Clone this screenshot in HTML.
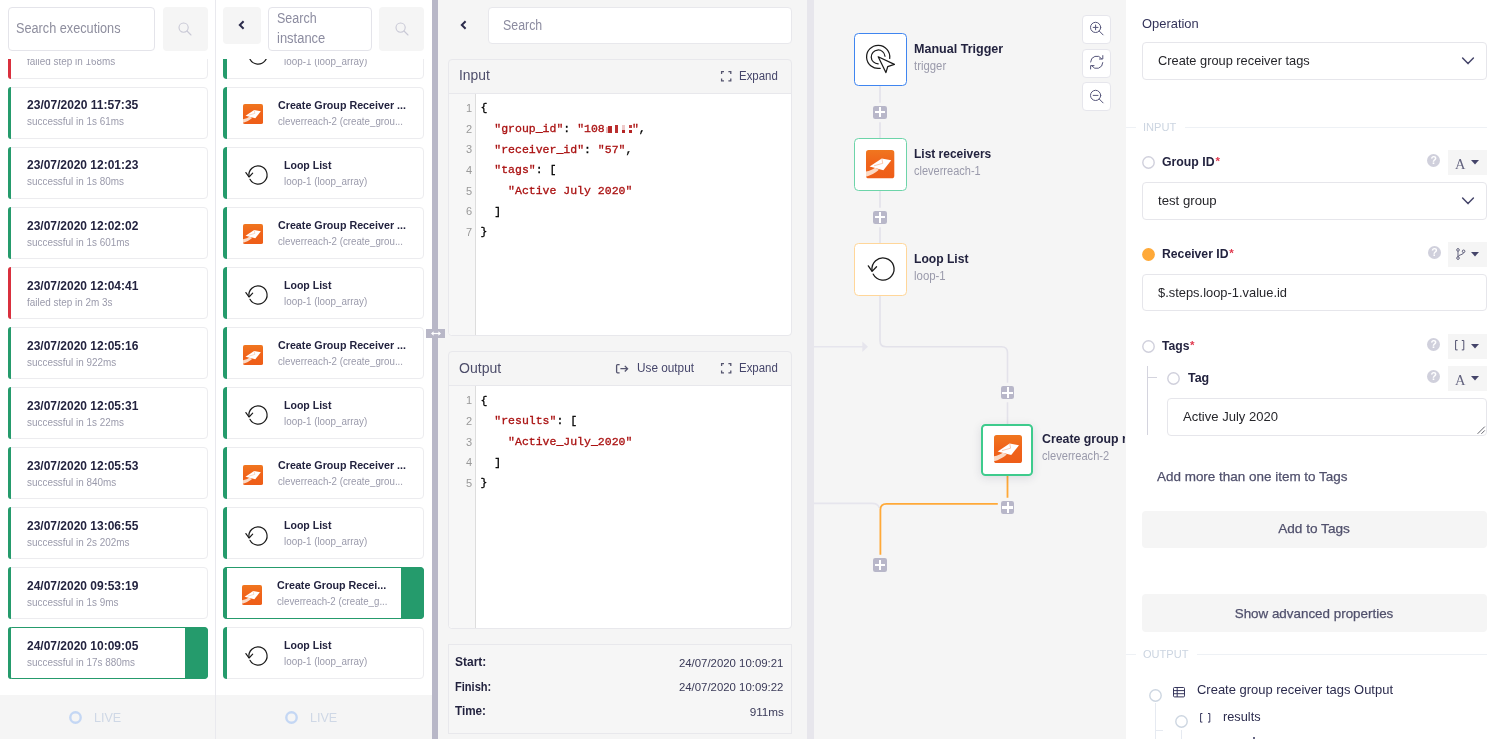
<!DOCTYPE html>
<html lang="en"><head><meta charset="utf-8"><title>Workflow debug</title>
<style>
html,body{margin:0;padding:0}
body{width:1500px;height:739px;overflow:hidden;position:relative;background:#fff;font-family:"Liberation Sans",Arial,sans-serif;-webkit-font-smoothing:antialiased}
i{display:block}
body>div{will-change:transform}
</style></head><body>
<div style="position:absolute;left:0px;top:0px;width:216px;height:739px;box-sizing:border-box;background:#fff;border-right:1px solid #e9e9ee;"><div style="position:absolute;left:8px;top:7px;width:147px;height:44px;box-sizing:border-box;border:1px solid #e4e4ea;border-radius:4px;background:#fff;"></div><span id="t1" style="position:absolute;left:16px;top:18.009px;font-size:14px;line-height:20px;font-weight:400;color:#8e8e9e;white-space:nowrap;transform:scaleX(0.9072);transform-origin:0 50%;">Search executions</span><div style="position:absolute;left:162.5px;top:7px;width:45px;height:44px;box-sizing:border-box;background:#f5f5f5;border-radius:4px;"></div><svg style="position:absolute;left:177px;top:21.3px;overflow:visible;" width="16" height="16" viewBox="0 0 16 16"><circle cx="6.6" cy="6.6" r="4.6" fill="none" stroke="#c9c9d6" stroke-width="1.1"/><path d="M10 10 L14 14" stroke="#c9c9d6" stroke-width="1.1" stroke-linecap="round"/></svg><div style="position:absolute;left:0px;top:59px;width:215px;height:636px;box-sizing:border-box;overflow:hidden;"><div style="position:absolute;left:7.5px;top:-32.45px;width:200px;height:52.3px;box-sizing:border-box;border:1px solid #ececef;border-radius:4px;background:#fff;"><div style="position:absolute;left:-1px;top:-1px;width:3.7px;height:52.3px;background:#d9303e;border-radius:4px 0 0 4px"></div><span id="e0a" style="position:absolute;left:18.3px;top:8.44px;font-size:13px;line-height:18px;font-weight:700;color:#23233f;white-space:nowrap;transform:scaleX(0.9275);transform-origin:0 50%;">23/07/2020 11:51:12</span><span id="e0b" style="position:absolute;left:18.3px;top:26.44px;font-size:11px;line-height:15px;font-weight:400;color:#9a9aab;white-space:nowrap;transform:scaleX(0.9014);transform-origin:0 50%;">failed step in 168ms</span></div><div style="position:absolute;left:7.5px;top:27.61px;width:200px;height:52.3px;box-sizing:border-box;border:1px solid #ececef;border-radius:4px;background:#fff;"><div style="position:absolute;left:-1px;top:-1px;width:3.7px;height:52.3px;background:#259b6c;border-radius:4px 0 0 4px"></div><span id="e1a" style="position:absolute;left:18.3px;top:8.393px;font-size:13px;line-height:18px;font-weight:700;color:#23233f;white-space:nowrap;transform:scaleX(0.9275);transform-origin:0 50%;">23/07/2020 11:57:35</span><span id="e1b" style="position:absolute;left:18.3px;top:26.393px;font-size:11px;line-height:15px;font-weight:400;color:#9a9aab;white-space:nowrap;transform:scaleX(0.9014);transform-origin:0 50%;">successful in 1s 61ms</span></div><div style="position:absolute;left:7.5px;top:87.67px;width:200px;height:52.3px;box-sizing:border-box;border:1px solid #ececef;border-radius:4px;background:#fff;"><div style="position:absolute;left:-1px;top:-1px;width:3.7px;height:52.3px;background:#259b6c;border-radius:4px 0 0 4px"></div><span id="e2a" style="position:absolute;left:18.3px;top:8.347px;font-size:13px;line-height:18px;font-weight:700;color:#23233f;white-space:nowrap;transform:scaleX(0.9220);transform-origin:0 50%;">23/07/2020 12:01:23</span><span id="e2b" style="position:absolute;left:18.3px;top:26.347px;font-size:11px;line-height:15px;font-weight:400;color:#9a9aab;white-space:nowrap;transform:scaleX(0.9014);transform-origin:0 50%;">successful in 1s 80ms</span></div><div style="position:absolute;left:7.5px;top:147.73px;width:200px;height:52.3px;box-sizing:border-box;border:1px solid #ececef;border-radius:4px;background:#fff;"><div style="position:absolute;left:-1px;top:-1px;width:3.7px;height:52.3px;background:#259b6c;border-radius:4px 0 0 4px"></div><span id="e3a" style="position:absolute;left:18.3px;top:9.284px;font-size:13px;line-height:18px;font-weight:700;color:#23233f;white-space:nowrap;transform:scaleX(0.9220);transform-origin:0 50%;">23/07/2020 12:02:02</span><span id="e3b" style="position:absolute;left:18.3px;top:27.284px;font-size:11px;line-height:15px;font-weight:400;color:#9a9aab;white-space:nowrap;transform:scaleX(0.9014);transform-origin:0 50%;">successful in 1s 601ms</span></div><div style="position:absolute;left:7.5px;top:207.79px;width:200px;height:52.3px;box-sizing:border-box;border:1px solid #ececef;border-radius:4px;background:#fff;"><div style="position:absolute;left:-1px;top:-1px;width:3.7px;height:52.3px;background:#d9303e;border-radius:4px 0 0 4px"></div><span id="e4a" style="position:absolute;left:18.3px;top:9.222px;font-size:13px;line-height:18px;font-weight:700;color:#23233f;white-space:nowrap;transform:scaleX(0.9220);transform-origin:0 50%;">23/07/2020 12:04:41</span><span id="e4b" style="position:absolute;left:18.3px;top:27.222px;font-size:11px;line-height:15px;font-weight:400;color:#9a9aab;white-space:nowrap;transform:scaleX(0.9014);transform-origin:0 50%;">failed step in 2m 3s</span></div><div style="position:absolute;left:7.5px;top:267.85px;width:200px;height:52.3px;box-sizing:border-box;border:1px solid #ececef;border-radius:4px;background:#fff;"><div style="position:absolute;left:-1px;top:-1px;width:3.7px;height:52.3px;background:#259b6c;border-radius:4px 0 0 4px"></div><span id="e5a" style="position:absolute;left:18.3px;top:9.159px;font-size:13px;line-height:18px;font-weight:700;color:#23233f;white-space:nowrap;transform:scaleX(0.9220);transform-origin:0 50%;">23/07/2020 12:05:16</span><span id="e5b" style="position:absolute;left:18.3px;top:27.159px;font-size:11px;line-height:15px;font-weight:400;color:#9a9aab;white-space:nowrap;transform:scaleX(0.9014);transform-origin:0 50%;">successful in 922ms</span></div><div style="position:absolute;left:7.5px;top:327.91px;width:200px;height:52.3px;box-sizing:border-box;border:1px solid #ececef;border-radius:4px;background:#fff;"><div style="position:absolute;left:-1px;top:-1px;width:3.7px;height:52.3px;background:#259b6c;border-radius:4px 0 0 4px"></div><span id="e6a" style="position:absolute;left:18.3px;top:9.096px;font-size:13px;line-height:18px;font-weight:700;color:#23233f;white-space:nowrap;transform:scaleX(0.9220);transform-origin:0 50%;">23/07/2020 12:05:31</span><span id="e6b" style="position:absolute;left:18.3px;top:27.096px;font-size:11px;line-height:15px;font-weight:400;color:#9a9aab;white-space:nowrap;transform:scaleX(0.9014);transform-origin:0 50%;">successful in 1s 22ms</span></div><div style="position:absolute;left:7.5px;top:387.97px;width:200px;height:52.3px;box-sizing:border-box;border:1px solid #ececef;border-radius:4px;background:#fff;"><div style="position:absolute;left:-1px;top:-1px;width:3.7px;height:52.3px;background:#259b6c;border-radius:4px 0 0 4px"></div><span id="e7a" style="position:absolute;left:18.3px;top:9.034px;font-size:13px;line-height:18px;font-weight:700;color:#23233f;white-space:nowrap;transform:scaleX(0.9220);transform-origin:0 50%;">23/07/2020 12:05:53</span><span id="e7b" style="position:absolute;left:18.3px;top:27.034px;font-size:11px;line-height:15px;font-weight:400;color:#9a9aab;white-space:nowrap;transform:scaleX(0.9014);transform-origin:0 50%;">successful in 840ms</span></div><div style="position:absolute;left:7.5px;top:448.03px;width:200px;height:52.3px;box-sizing:border-box;border:1px solid #ececef;border-radius:4px;background:#fff;"><div style="position:absolute;left:-1px;top:-1px;width:3.7px;height:52.3px;background:#259b6c;border-radius:4px 0 0 4px"></div><span id="e8a" style="position:absolute;left:18.3px;top:8.988px;font-size:13px;line-height:18px;font-weight:700;color:#23233f;white-space:nowrap;transform:scaleX(0.9220);transform-origin:0 50%;">23/07/2020 13:06:55</span><span id="e8b" style="position:absolute;left:18.3px;top:26.988px;font-size:11px;line-height:15px;font-weight:400;color:#9a9aab;white-space:nowrap;transform:scaleX(0.9014);transform-origin:0 50%;">successful in 2s 202ms</span></div><div style="position:absolute;left:7.5px;top:508.09px;width:200px;height:52.3px;box-sizing:border-box;border:1px solid #ececef;border-radius:4px;background:#fff;"><div style="position:absolute;left:-1px;top:-1px;width:3.7px;height:52.3px;background:#259b6c;border-radius:4px 0 0 4px"></div><span id="e9a" style="position:absolute;left:18.3px;top:8.925px;font-size:13px;line-height:18px;font-weight:700;color:#23233f;white-space:nowrap;transform:scaleX(0.9220);transform-origin:0 50%;">24/07/2020 09:53:19</span><span id="e9b" style="position:absolute;left:18.3px;top:26.925px;font-size:11px;line-height:15px;font-weight:400;color:#9a9aab;white-space:nowrap;transform:scaleX(0.9014);transform-origin:0 50%;">successful in 1s 9ms</span></div><div style="position:absolute;left:7.5px;top:568.15px;width:200px;height:52.3px;box-sizing:border-box;border:1px solid #259b6c;border-radius:4px;background:#fff;"><div style="position:absolute;left:-1px;top:-1px;width:3.7px;height:52.3px;background:#259b6c;border-radius:4px 0 0 4px"></div><div style="position:absolute;right:-1px;top:-1px;width:22.6px;height:52.3px;background:#259b6c;border-radius:0 4px 4px 0"></div><span id="e10a" style="position:absolute;left:18.3px;top:8.862px;font-size:13px;line-height:18px;font-weight:700;color:#23233f;white-space:nowrap;transform:scaleX(0.9220);transform-origin:0 50%;">24/07/2020 10:09:05</span><span id="e10b" style="position:absolute;left:18.3px;top:26.862px;font-size:11px;line-height:15px;font-weight:400;color:#9a9aab;white-space:nowrap;transform:scaleX(0.9014);transform-origin:0 50%;">successful in 17s 880ms</span></div></div><div style="position:absolute;left:0px;top:695px;width:215px;height:44px;box-sizing:border-box;background:#f5f5f5;"><svg style="position:absolute;left:68.8px;top:15.9px;overflow:visible;" width="13" height="13" viewBox="0 0 13 13"><circle cx="6.5" cy="6.5" r="5.2" fill="none" stroke="#c4d7f4" stroke-width="2.4"/></svg><span id="live215" style="position:absolute;left:94.2px;top:13.006px;font-size:13.5px;line-height:19px;font-weight:400;color:#cfd8e6;white-space:nowrap;transform:scaleX(0.9289);transform-origin:0 50%;">LIVE</span></div></div>
<div style="position:absolute;left:216px;top:0px;width:216px;height:739px;box-sizing:border-box;background:#fff;"><div style="position:absolute;left:7.3px;top:7px;width:37.6px;height:37px;box-sizing:border-box;background:#f5f5f5;border-radius:4px;"></div><svg style="position:absolute;left:22px;top:20.3px;overflow:visible;" width="8" height="10" viewBox="0 0 8 10"><path d="M5.6 1.2 L1.8 5 L5.6 8.8" fill="none" stroke="#2b2b4b" stroke-width="2" stroke-linejoin="miter"/></svg><div style="position:absolute;left:52.3px;top:7px;width:103.5px;height:44px;box-sizing:border-box;border:1px solid #e4e4ea;border-radius:4px;background:#fff;"></div><span id="si1" style="position:absolute;left:60.7px;top:8.003px;font-size:14px;line-height:20px;font-weight:400;color:#8c8ca0;white-space:nowrap;transform:scaleX(0.8927);transform-origin:0 50%;">Search</span><span id="si2" style="position:absolute;left:60.7px;top:28.003px;font-size:14px;line-height:20px;font-weight:400;color:#8c8ca0;white-space:nowrap;transform:scaleX(0.9261);transform-origin:0 50%;">instance</span><div style="position:absolute;left:163px;top:7px;width:45px;height:44px;box-sizing:border-box;background:#f5f5f5;border-radius:4px;"></div><svg style="position:absolute;left:177.8px;top:21.3px;overflow:visible;" width="16" height="16" viewBox="0 0 16 16"><circle cx="6.6" cy="6.6" r="4.6" fill="none" stroke="#c9c9d6" stroke-width="1.1"/><path d="M10 10 L14 14" stroke="#c9c9d6" stroke-width="1.1" stroke-linecap="round"/></svg><div style="position:absolute;left:0px;top:59px;width:216px;height:636px;box-sizing:border-box;overflow:hidden;"><div style="position:absolute;left:7.2px;top:-32.45px;width:200.6px;height:52.3px;box-sizing:border-box;border:1px solid #ececef;border-radius:4px;background:#fff;"><div style="position:absolute;left:-1px;top:-1px;width:3.7px;height:52.3px;background:#259b6c;border-radius:4px 0 0 4px"></div><div style="position:absolute;left:33.6px;top:27.5px"><svg style="position:absolute;left:0;top:0;overflow:visible" width="1" height="1"><path d="M-8.03 4.27 A9.1 9.1 0 1 0 -8.99 1.42" fill="none" stroke="#1a1a1a" stroke-width="1.2" stroke-linecap="round"/><path d="M-12.10 -2.45 L-8.99 2.02 L-5.32 -1.81" fill="none" stroke="#1a1a1a" stroke-width="1.2" stroke-linecap="round" stroke-linejoin="round"/></svg></div><span id="s0a" style="position:absolute;left:59.6px;top:9.45px;font-size:11.4px;line-height:16px;font-weight:700;color:#23233f;white-space:nowrap;transform:scaleX(0.9268);transform-origin:0 50%;">Loop List</span><span id="s0b" style="position:absolute;left:59.6px;top:26.45px;font-size:10.4px;line-height:15px;font-weight:400;color:#9a9aab;white-space:nowrap;transform:scaleX(0.9488);transform-origin:0 50%;">loop-1 (loop_array)</span></div><div style="position:absolute;left:7.2px;top:27.61px;width:200.6px;height:52.3px;box-sizing:border-box;border:1px solid #ececef;border-radius:4px;background:#fff;"><div style="position:absolute;left:-1px;top:-1px;width:3.7px;height:52.3px;background:#259b6c;border-radius:4px 0 0 4px"></div><svg style="position:absolute;left:19px;top:16.7px;overflow:visible;" width="20" height="20" viewBox="0 0 28 28"><defs><linearGradient id="cg28" x1="0" y1="0" x2="0" y2="1"><stop offset="0" stop-color="#f0761f"/><stop offset="0.45" stop-color="#f0641a"/><stop offset="1" stop-color="#ee5d18"/></linearGradient><clipPath id="cc28"><rect x="0" y="0" width="28" height="28" rx="2.6"/></clipPath></defs><rect x="0" y="0" width="28" height="28" rx="2.6" fill="url(#cg28)"/><g clip-path="url(#cc28)"><path d="M-1 21.5 C3 21 6.5 19.5 9 17.6 L12.8 19.6 C9 23 4 25.5 -1 26.6 Z" fill="#fbd9c4"/><path d="M3.6 16.4 L15.6 8.4 L25 10.2 L17.2 20 Z" fill="#ffffff"/><path d="M15.8 9 L16.6 13.2 L8 15.6" fill="none" stroke="#f6a57a" stroke-width="0.6"/></g></svg><span id="s1a" style="position:absolute;left:54.3px;top:9.403px;font-size:11.4px;line-height:16px;font-weight:700;color:#23233f;white-space:nowrap;transform:scaleX(0.9404);transform-origin:0 50%;">Create Group Receiver ...</span><span id="s1b" style="position:absolute;left:54.3px;top:26.403px;font-size:10.4px;line-height:15px;font-weight:400;color:#9a9aab;white-space:nowrap;transform:scaleX(0.9369);transform-origin:0 50%;">cleverreach-2 (create_grou...</span></div><div style="position:absolute;left:7.2px;top:87.67px;width:200.6px;height:52.3px;box-sizing:border-box;border:1px solid #ececef;border-radius:4px;background:#fff;"><div style="position:absolute;left:-1px;top:-1px;width:3.7px;height:52.3px;background:#259b6c;border-radius:4px 0 0 4px"></div><div style="position:absolute;left:33.6px;top:27.5px"><svg style="position:absolute;left:0;top:0;overflow:visible" width="1" height="1"><path d="M-8.03 4.27 A9.1 9.1 0 1 0 -8.99 1.42" fill="none" stroke="#1a1a1a" stroke-width="1.2" stroke-linecap="round"/><path d="M-12.10 -2.45 L-8.99 2.02 L-5.32 -1.81" fill="none" stroke="#1a1a1a" stroke-width="1.2" stroke-linecap="round" stroke-linejoin="round"/></svg></div><span id="s2a" style="position:absolute;left:59.6px;top:9.357px;font-size:11.4px;line-height:16px;font-weight:700;color:#23233f;white-space:nowrap;transform:scaleX(0.9268);transform-origin:0 50%;">Loop List</span><span id="s2b" style="position:absolute;left:59.6px;top:26.357px;font-size:10.4px;line-height:15px;font-weight:400;color:#9a9aab;white-space:nowrap;transform:scaleX(0.9488);transform-origin:0 50%;">loop-1 (loop_array)</span></div><div style="position:absolute;left:7.2px;top:147.73px;width:200.6px;height:52.3px;box-sizing:border-box;border:1px solid #ececef;border-radius:4px;background:#fff;"><div style="position:absolute;left:-1px;top:-1px;width:3.7px;height:52.3px;background:#259b6c;border-radius:4px 0 0 4px"></div><svg style="position:absolute;left:19px;top:16.7px;overflow:visible;" width="20" height="20" viewBox="0 0 28 28"><defs><linearGradient id="cg33" x1="0" y1="0" x2="0" y2="1"><stop offset="0" stop-color="#f0761f"/><stop offset="0.45" stop-color="#f0641a"/><stop offset="1" stop-color="#ee5d18"/></linearGradient><clipPath id="cc33"><rect x="0" y="0" width="28" height="28" rx="2.6"/></clipPath></defs><rect x="0" y="0" width="28" height="28" rx="2.6" fill="url(#cg33)"/><g clip-path="url(#cc33)"><path d="M-1 21.5 C3 21 6.5 19.5 9 17.6 L12.8 19.6 C9 23 4 25.5 -1 26.6 Z" fill="#fbd9c4"/><path d="M3.6 16.4 L15.6 8.4 L25 10.2 L17.2 20 Z" fill="#ffffff"/><path d="M15.8 9 L16.6 13.2 L8 15.6" fill="none" stroke="#f6a57a" stroke-width="0.6"/></g></svg><span id="s3a" style="position:absolute;left:54.3px;top:9.294px;font-size:11.4px;line-height:16px;font-weight:700;color:#23233f;white-space:nowrap;transform:scaleX(0.9404);transform-origin:0 50%;">Create Group Receiver ...</span><span id="s3b" style="position:absolute;left:54.3px;top:26.294px;font-size:10.4px;line-height:15px;font-weight:400;color:#9a9aab;white-space:nowrap;transform:scaleX(0.9369);transform-origin:0 50%;">cleverreach-2 (create_grou...</span></div><div style="position:absolute;left:7.2px;top:207.79px;width:200.6px;height:52.3px;box-sizing:border-box;border:1px solid #ececef;border-radius:4px;background:#fff;"><div style="position:absolute;left:-1px;top:-1px;width:3.7px;height:52.3px;background:#259b6c;border-radius:4px 0 0 4px"></div><div style="position:absolute;left:33.6px;top:27.5px"><svg style="position:absolute;left:0;top:0;overflow:visible" width="1" height="1"><path d="M-8.03 4.27 A9.1 9.1 0 1 0 -8.99 1.42" fill="none" stroke="#1a1a1a" stroke-width="1.2" stroke-linecap="round"/><path d="M-12.10 -2.45 L-8.99 2.02 L-5.32 -1.81" fill="none" stroke="#1a1a1a" stroke-width="1.2" stroke-linecap="round" stroke-linejoin="round"/></svg></div><span id="s4a" style="position:absolute;left:59.6px;top:9.231px;font-size:11.4px;line-height:16px;font-weight:700;color:#23233f;white-space:nowrap;transform:scaleX(0.9268);transform-origin:0 50%;">Loop List</span><span id="s4b" style="position:absolute;left:59.6px;top:26.231px;font-size:10.4px;line-height:15px;font-weight:400;color:#9a9aab;white-space:nowrap;transform:scaleX(0.9488);transform-origin:0 50%;">loop-1 (loop_array)</span></div><div style="position:absolute;left:7.2px;top:267.85px;width:200.6px;height:52.3px;box-sizing:border-box;border:1px solid #ececef;border-radius:4px;background:#fff;"><div style="position:absolute;left:-1px;top:-1px;width:3.7px;height:52.3px;background:#259b6c;border-radius:4px 0 0 4px"></div><svg style="position:absolute;left:19px;top:16.7px;overflow:visible;" width="20" height="20" viewBox="0 0 28 28"><defs><linearGradient id="cg38" x1="0" y1="0" x2="0" y2="1"><stop offset="0" stop-color="#f0761f"/><stop offset="0.45" stop-color="#f0641a"/><stop offset="1" stop-color="#ee5d18"/></linearGradient><clipPath id="cc38"><rect x="0" y="0" width="28" height="28" rx="2.6"/></clipPath></defs><rect x="0" y="0" width="28" height="28" rx="2.6" fill="url(#cg38)"/><g clip-path="url(#cc38)"><path d="M-1 21.5 C3 21 6.5 19.5 9 17.6 L12.8 19.6 C9 23 4 25.5 -1 26.6 Z" fill="#fbd9c4"/><path d="M3.6 16.4 L15.6 8.4 L25 10.2 L17.2 20 Z" fill="#ffffff"/><path d="M15.8 9 L16.6 13.2 L8 15.6" fill="none" stroke="#f6a57a" stroke-width="0.6"/></g></svg><span id="s5a" style="position:absolute;left:54.3px;top:9.169px;font-size:11.4px;line-height:16px;font-weight:700;color:#23233f;white-space:nowrap;transform:scaleX(0.9404);transform-origin:0 50%;">Create Group Receiver ...</span><span id="s5b" style="position:absolute;left:54.3px;top:26.169px;font-size:10.4px;line-height:15px;font-weight:400;color:#9a9aab;white-space:nowrap;transform:scaleX(0.9369);transform-origin:0 50%;">cleverreach-2 (create_grou...</span></div><div style="position:absolute;left:7.2px;top:327.91px;width:200.6px;height:52.3px;box-sizing:border-box;border:1px solid #ececef;border-radius:4px;background:#fff;"><div style="position:absolute;left:-1px;top:-1px;width:3.7px;height:52.3px;background:#259b6c;border-radius:4px 0 0 4px"></div><div style="position:absolute;left:33.6px;top:27.5px"><svg style="position:absolute;left:0;top:0;overflow:visible" width="1" height="1"><path d="M-8.03 4.27 A9.1 9.1 0 1 0 -8.99 1.42" fill="none" stroke="#1a1a1a" stroke-width="1.2" stroke-linecap="round"/><path d="M-12.10 -2.45 L-8.99 2.02 L-5.32 -1.81" fill="none" stroke="#1a1a1a" stroke-width="1.2" stroke-linecap="round" stroke-linejoin="round"/></svg></div><span id="s6a" style="position:absolute;left:59.6px;top:9.106px;font-size:11.4px;line-height:16px;font-weight:700;color:#23233f;white-space:nowrap;transform:scaleX(0.9268);transform-origin:0 50%;">Loop List</span><span id="s6b" style="position:absolute;left:59.6px;top:26.106px;font-size:10.4px;line-height:15px;font-weight:400;color:#9a9aab;white-space:nowrap;transform:scaleX(0.9488);transform-origin:0 50%;">loop-1 (loop_array)</span></div><div style="position:absolute;left:7.2px;top:387.97px;width:200.6px;height:52.3px;box-sizing:border-box;border:1px solid #ececef;border-radius:4px;background:#fff;"><div style="position:absolute;left:-1px;top:-1px;width:3.7px;height:52.3px;background:#259b6c;border-radius:4px 0 0 4px"></div><svg style="position:absolute;left:19px;top:16.7px;overflow:visible;" width="20" height="20" viewBox="0 0 28 28"><defs><linearGradient id="cg43" x1="0" y1="0" x2="0" y2="1"><stop offset="0" stop-color="#f0761f"/><stop offset="0.45" stop-color="#f0641a"/><stop offset="1" stop-color="#ee5d18"/></linearGradient><clipPath id="cc43"><rect x="0" y="0" width="28" height="28" rx="2.6"/></clipPath></defs><rect x="0" y="0" width="28" height="28" rx="2.6" fill="url(#cg43)"/><g clip-path="url(#cc43)"><path d="M-1 21.5 C3 21 6.5 19.5 9 17.6 L12.8 19.6 C9 23 4 25.5 -1 26.6 Z" fill="#fbd9c4"/><path d="M3.6 16.4 L15.6 8.4 L25 10.2 L17.2 20 Z" fill="#ffffff"/><path d="M15.8 9 L16.6 13.2 L8 15.6" fill="none" stroke="#f6a57a" stroke-width="0.6"/></g></svg><span id="s7a" style="position:absolute;left:54.3px;top:9.044px;font-size:11.4px;line-height:16px;font-weight:700;color:#23233f;white-space:nowrap;transform:scaleX(0.9404);transform-origin:0 50%;">Create Group Receiver ...</span><span id="s7b" style="position:absolute;left:54.3px;top:26.044px;font-size:10.4px;line-height:15px;font-weight:400;color:#9a9aab;white-space:nowrap;transform:scaleX(0.9369);transform-origin:0 50%;">cleverreach-2 (create_grou...</span></div><div style="position:absolute;left:7.2px;top:448.03px;width:200.6px;height:52.3px;box-sizing:border-box;border:1px solid #ececef;border-radius:4px;background:#fff;"><div style="position:absolute;left:-1px;top:-1px;width:3.7px;height:52.3px;background:#259b6c;border-radius:4px 0 0 4px"></div><div style="position:absolute;left:33.6px;top:27.5px"><svg style="position:absolute;left:0;top:0;overflow:visible" width="1" height="1"><path d="M-8.03 4.27 A9.1 9.1 0 1 0 -8.99 1.42" fill="none" stroke="#1a1a1a" stroke-width="1.2" stroke-linecap="round"/><path d="M-12.10 -2.45 L-8.99 2.02 L-5.32 -1.81" fill="none" stroke="#1a1a1a" stroke-width="1.2" stroke-linecap="round" stroke-linejoin="round"/></svg></div><span id="s8a" style="position:absolute;left:59.6px;top:8.998px;font-size:11.4px;line-height:16px;font-weight:700;color:#23233f;white-space:nowrap;transform:scaleX(0.9268);transform-origin:0 50%;">Loop List</span><span id="s8b" style="position:absolute;left:59.6px;top:25.998px;font-size:10.4px;line-height:15px;font-weight:400;color:#9a9aab;white-space:nowrap;transform:scaleX(0.9488);transform-origin:0 50%;">loop-1 (loop_array)</span></div><div style="position:absolute;left:7.2px;top:508.09px;width:200.6px;height:52.3px;box-sizing:border-box;border:1px solid #259b6c;border-radius:4px;background:#fff;"><div style="position:absolute;left:-1px;top:-1px;width:3.7px;height:52.3px;background:#259b6c;border-radius:4px 0 0 4px"></div><div style="position:absolute;right:-1px;top:-1px;width:22.6px;height:52.3px;background:#259b6c;border-radius:0 4px 4px 0"></div><svg style="position:absolute;left:18px;top:16.7px;overflow:visible;" width="20" height="20" viewBox="0 0 28 28"><defs><linearGradient id="cg48" x1="0" y1="0" x2="0" y2="1"><stop offset="0" stop-color="#f0761f"/><stop offset="0.45" stop-color="#f0641a"/><stop offset="1" stop-color="#ee5d18"/></linearGradient><clipPath id="cc48"><rect x="0" y="0" width="28" height="28" rx="2.6"/></clipPath></defs><rect x="0" y="0" width="28" height="28" rx="2.6" fill="url(#cg48)"/><g clip-path="url(#cc48)"><path d="M-1 21.5 C3 21 6.5 19.5 9 17.6 L12.8 19.6 C9 23 4 25.5 -1 26.6 Z" fill="#fbd9c4"/><path d="M3.6 16.4 L15.6 8.4 L25 10.2 L17.2 20 Z" fill="#ffffff"/><path d="M15.8 9 L16.6 13.2 L8 15.6" fill="none" stroke="#f6a57a" stroke-width="0.6"/></g></svg><span id="s9a" style="position:absolute;left:53px;top:8.935px;font-size:11.4px;line-height:16px;font-weight:700;color:#23233f;white-space:nowrap;transform:scaleX(0.9426);transform-origin:0 50%;">Create Group Recei...</span><span id="s9b" style="position:absolute;left:53px;top:25.935px;font-size:10.4px;line-height:15px;font-weight:400;color:#9a9aab;white-space:nowrap;transform:scaleX(0.9332);transform-origin:0 50%;">cleverreach-2 (create_g...</span></div><div style="position:absolute;left:7.2px;top:568.15px;width:200.6px;height:52.3px;box-sizing:border-box;border:1px solid #ececef;border-radius:4px;background:#fff;"><div style="position:absolute;left:-1px;top:-1px;width:3.7px;height:52.3px;background:#259b6c;border-radius:4px 0 0 4px"></div><div style="position:absolute;left:33.6px;top:27.5px"><svg style="position:absolute;left:0;top:0;overflow:visible" width="1" height="1"><path d="M-8.03 4.27 A9.1 9.1 0 1 0 -8.99 1.42" fill="none" stroke="#1a1a1a" stroke-width="1.2" stroke-linecap="round"/><path d="M-12.10 -2.45 L-8.99 2.02 L-5.32 -1.81" fill="none" stroke="#1a1a1a" stroke-width="1.2" stroke-linecap="round" stroke-linejoin="round"/></svg></div><span id="s10a" style="position:absolute;left:59.6px;top:8.873px;font-size:11.4px;line-height:16px;font-weight:700;color:#23233f;white-space:nowrap;transform:scaleX(0.9268);transform-origin:0 50%;">Loop List</span><span id="s10b" style="position:absolute;left:59.6px;top:25.873px;font-size:10.4px;line-height:15px;font-weight:400;color:#9a9aab;white-space:nowrap;transform:scaleX(0.9488);transform-origin:0 50%;">loop-1 (loop_array)</span></div></div><div style="position:absolute;left:0px;top:695px;width:216px;height:44px;box-sizing:border-box;background:#f5f5f5;"><svg style="position:absolute;left:68.8px;top:15.9px;overflow:visible;" width="13" height="13" viewBox="0 0 13 13"><circle cx="6.5" cy="6.5" r="5.2" fill="none" stroke="#c4d7f4" stroke-width="2.4"/></svg><span id="live216" style="position:absolute;left:94.2px;top:13.006px;font-size:13.5px;line-height:19px;font-weight:400;color:#cfd8e6;white-space:nowrap;transform:scaleX(0.9289);transform-origin:0 50%;">LIVE</span></div></div>
<div style="position:absolute;left:432px;top:0px;width:6px;height:739px;box-sizing:border-box;background:#b8b7c7;"></div>
<div style="position:absolute;left:426px;top:329.2px;width:19px;height:9.3px;box-sizing:border-box;background:#b8b7c7;z-index:5;"><svg style="position:absolute;left:4.6px;top:2.2px;overflow:visible;" width="10" height="5" viewBox="0 0 10 5"><path d="M1.6 2.5 H8.4" stroke="#fff" stroke-width="1.2"/><path d="M0 2.5 L2.6 0.3 V4.7 Z M10 2.5 L7.4 0.3 V4.7 Z" fill="#fff"/></svg></div>
<div style="position:absolute;left:438px;top:0px;width:369px;height:739px;box-sizing:border-box;background:#f5f5f5;"><svg style="position:absolute;left:21.5px;top:20.4px;overflow:visible;" width="8" height="10" viewBox="0 0 8 10"><path d="M5.6 1.2 L1.8 5 L5.6 8.8" fill="none" stroke="#2b2b4b" stroke-width="2" stroke-linejoin="miter"/></svg><div style="position:absolute;left:49.5px;top:6.8px;width:304px;height:36.8px;box-sizing:border-box;border:1px solid #e8e8ec;border-radius:4px;background:#fff;"></div><span id="ms" style="position:absolute;left:65.3px;top:15.006px;font-size:14px;line-height:20px;font-weight:400;color:#8c8ca0;white-space:nowrap;transform:scaleX(0.8837);transform-origin:0 50%;">Search</span><div style="position:absolute;left:9.5px;top:59px;width:344.3px;height:276.6px;box-sizing:border-box;border:1px solid #e8e8ec;border-radius:4px;background:#f5f5f5;"><div style="position:absolute;left:-1px;top:-1px;width:344.3px;height:35px;box-sizing:border-box;border-bottom:1px solid #e8e8ec;"></div><span id="cititle" style="position:absolute;left:10.8px;top:4.009px;font-size:15px;line-height:21px;font-weight:400;color:#4d4d6a;white-space:nowrap;transform:scaleX(0.9228);transform-origin:0 50%;">Input</span><svg style="position:absolute;left:272.3px;top:11px;overflow:visible;" width="10.4" height="10.4" viewBox="0 0 10.4 10.4"><path d="M0.6 3 V0.6 H3 M7.4 0.6 H9.8 V3 M9.8 7.4 V9.8 H7.4 M3 9.8 H0.6 V7.4" fill="none" stroke="#55556f" stroke-width="1.3"/></svg><span id="ciexp" style="position:absolute;left:290.7px;top:8.009px;font-size:12px;line-height:17px;font-weight:400;color:#45456a;white-space:nowrap;transform:scaleX(0.9532);transform-origin:0 50%;">Expand</span><div style="position:absolute;left:0px;top:34px;width:342.3px;height:240.6px;box-sizing:border-box;background:#fff;border-radius:0 0 4px 4px;"></div><div style="position:absolute;left:0px;top:34px;width:27.6px;height:240.6px;box-sizing:border-box;background:#f7f7f7;border-right:1px solid #ddd;border-radius:0 0 0 4px;"></div><span id="cin0" style="position:absolute;right:318.8px;top:41.009px;font-size:11px;line-height:15px;font-weight:400;color:#999;white-space:nowrap;font-family:'Liberation Sans',sans-serif;">1</span><span id="cic0" style="position:absolute;left:32px;top:40.3px;font-family:'Liberation Mono',monospace;font-size:11.5px;line-height:16px;white-space:pre;color:#000;font-weight:400;-webkit-text-stroke:0.3px currentColor">{</span><span id="cin1" style="position:absolute;right:318.8px;top:62.008px;font-size:11px;line-height:15px;font-weight:400;color:#999;white-space:nowrap;font-family:'Liberation Sans',sans-serif;">2</span><span id="cic1" style="position:absolute;left:32px;top:60.97px;font-family:'Liberation Mono',monospace;font-size:11.5px;line-height:16px;white-space:pre;color:#000;font-weight:400;-webkit-text-stroke:0.3px currentColor">  <span style="color:#a11">"group_id"</span>: <span style="color:#a11">"108</span><span style="display:inline-block;position:relative;width:27.2px;height:9px;vertical-align:-1px"><i style="position:absolute;left:1.2px;top:3.4px;width:2px;height:5.4px;background:#e7b7b7"></i><i style="position:absolute;left:3.4px;top:2.2px;width:3.4px;height:6.8px;background:#b82a2a"></i><i style="position:absolute;left:10px;top:1.4px;width:3.6px;height:7.4px;background:#bb3030"></i><i style="position:absolute;left:17.4px;top:1px;width:3px;height:4.6px;background:#efcaca"></i><i style="position:absolute;left:17.2px;top:6.4px;width:3.2px;height:2.8px;background:#b52525"></i><i style="position:absolute;left:23.8px;top:1.2px;width:3.2px;height:3px;background:#c04040"></i><i style="position:absolute;left:23.8px;top:6.4px;width:3.2px;height:2.8px;background:#b52525"></i></span><span style="color:#a11">"</span>,</span><span id="cin2" style="position:absolute;right:318.8px;top:82.006px;font-size:11px;line-height:15px;font-weight:400;color:#999;white-space:nowrap;font-family:'Liberation Sans',sans-serif;">3</span><span id="cic2" style="position:absolute;left:32px;top:81.64px;font-family:'Liberation Mono',monospace;font-size:11.5px;line-height:16px;white-space:pre;color:#000;font-weight:400;-webkit-text-stroke:0.3px currentColor">  <span style="color:#a11">"receiver_id"</span>: <span style="color:#a11">"57"</span>,</span><span id="cin3" style="position:absolute;right:318.8px;top:103.004px;font-size:11px;line-height:15px;font-weight:400;color:#999;white-space:nowrap;font-family:'Liberation Sans',sans-serif;">4</span><span id="cic3" style="position:absolute;left:32px;top:102.31px;font-family:'Liberation Mono',monospace;font-size:11.5px;line-height:16px;white-space:pre;color:#000;font-weight:400;-webkit-text-stroke:0.3px currentColor">  <span style="color:#a11">"tags"</span>: [</span><span id="cin4" style="position:absolute;right:318.8px;top:124.002px;font-size:11px;line-height:15px;font-weight:400;color:#999;white-space:nowrap;font-family:'Liberation Sans',sans-serif;">5</span><span id="cic4" style="position:absolute;left:32px;top:122.98px;font-family:'Liberation Mono',monospace;font-size:11.5px;line-height:16px;white-space:pre;color:#000;font-weight:400;-webkit-text-stroke:0.3px currentColor">    <span style="color:#a11">"Active July 2020"</span></span><span id="cin5" style="position:absolute;right:318.8px;top:144px;font-size:11px;line-height:15px;font-weight:400;color:#999;white-space:nowrap;font-family:'Liberation Sans',sans-serif;">6</span><span id="cic5" style="position:absolute;left:32px;top:143.65px;font-family:'Liberation Mono',monospace;font-size:11.5px;line-height:16px;white-space:pre;color:#000;font-weight:400;-webkit-text-stroke:0.3px currentColor">  ]</span><span id="cin6" style="position:absolute;right:318.8px;top:165.014px;font-size:11px;line-height:15px;font-weight:400;color:#999;white-space:nowrap;font-family:'Liberation Sans',sans-serif;">7</span><span id="cic6" style="position:absolute;left:32px;top:164.32px;font-family:'Liberation Mono',monospace;font-size:11.5px;line-height:16px;white-space:pre;color:#000;font-weight:400;-webkit-text-stroke:0.3px currentColor">}</span></div><div style="position:absolute;left:9.5px;top:351.3px;width:344.3px;height:277.8px;box-sizing:border-box;border:1px solid #e8e8ec;border-radius:4px;background:#f5f5f5;"><div style="position:absolute;left:-1px;top:-1px;width:344.3px;height:35px;box-sizing:border-box;border-bottom:1px solid #e8e8ec;"></div><span id="cotitle" style="position:absolute;left:10.8px;top:4.712px;font-size:15px;line-height:21px;font-weight:400;color:#4d4d6a;white-space:nowrap;transform:scaleX(0.9371);transform-origin:0 50%;">Output</span><svg style="position:absolute;left:272.3px;top:11px;overflow:visible;" width="10.4" height="10.4" viewBox="0 0 10.4 10.4"><path d="M0.6 3 V0.6 H3 M7.4 0.6 H9.8 V3 M9.8 7.4 V9.8 H7.4 M3 9.8 H0.6 V7.4" fill="none" stroke="#55556f" stroke-width="1.3"/></svg><span id="coexp" style="position:absolute;left:290.7px;top:7.712px;font-size:12px;line-height:17px;font-weight:400;color:#45456a;white-space:nowrap;transform:scaleX(0.9532);transform-origin:0 50%;">Expand</span><svg style="position:absolute;left:167.8px;top:12px;overflow:visible;" width="12.4" height="9.4" viewBox="0 0 12.4 9.4"><path d="M3.6 0.6 H1.6 Q0.6 0.6 0.6 1.6 V7.8 Q0.6 8.8 1.6 8.8 H3.6" fill="none" stroke="#55556f" stroke-width="1.3"/><path d="M4.4 4.7 H11.6 M8.8 1.9 L11.6 4.7 L8.8 7.5" fill="none" stroke="#55556f" stroke-width="1.3"/></svg><span id="couse" style="position:absolute;left:188.5px;top:7.712px;font-size:12px;line-height:17px;font-weight:400;color:#45456a;white-space:nowrap;transform:scaleX(0.9820);transform-origin:0 50%;">Use output</span><div style="position:absolute;left:0px;top:34px;width:342.3px;height:241.8px;box-sizing:border-box;background:#fff;border-radius:0 0 4px 4px;"></div><div style="position:absolute;left:0px;top:34px;width:27.6px;height:241.8px;box-sizing:border-box;background:#f7f7f7;border-right:1px solid #ddd;border-radius:0 0 0 4px;"></div><span id="con0" style="position:absolute;right:318.8px;top:40.712px;font-size:11px;line-height:15px;font-weight:400;color:#999;white-space:nowrap;font-family:'Liberation Sans',sans-serif;">1</span><span id="coc0" style="position:absolute;left:32px;top:40.3px;font-family:'Liberation Mono',monospace;font-size:11.5px;line-height:16px;white-space:pre;color:#000;font-weight:400;-webkit-text-stroke:0.3px currentColor">{</span><span id="con1" style="position:absolute;right:318.8px;top:61.711px;font-size:11px;line-height:15px;font-weight:400;color:#999;white-space:nowrap;font-family:'Liberation Sans',sans-serif;">2</span><span id="coc1" style="position:absolute;left:32px;top:60.97px;font-family:'Liberation Mono',monospace;font-size:11.5px;line-height:16px;white-space:pre;color:#000;font-weight:400;-webkit-text-stroke:0.3px currentColor">  <span style="color:#a11">"results"</span>: [</span><span id="con2" style="position:absolute;right:318.8px;top:82.709px;font-size:11px;line-height:15px;font-weight:400;color:#999;white-space:nowrap;font-family:'Liberation Sans',sans-serif;">3</span><span id="coc2" style="position:absolute;left:32px;top:81.64px;font-family:'Liberation Mono',monospace;font-size:11.5px;line-height:16px;white-space:pre;color:#000;font-weight:400;-webkit-text-stroke:0.3px currentColor">    <span style="color:#a11">"Active_July_2020"</span></span><span id="con3" style="position:absolute;right:318.8px;top:102.707px;font-size:11px;line-height:15px;font-weight:400;color:#999;white-space:nowrap;font-family:'Liberation Sans',sans-serif;">4</span><span id="coc3" style="position:absolute;left:32px;top:102.31px;font-family:'Liberation Mono',monospace;font-size:11.5px;line-height:16px;white-space:pre;color:#000;font-weight:400;-webkit-text-stroke:0.3px currentColor">  ]</span><span id="con4" style="position:absolute;right:318.8px;top:123.705px;font-size:11px;line-height:15px;font-weight:400;color:#999;white-space:nowrap;font-family:'Liberation Sans',sans-serif;">5</span><span id="coc4" style="position:absolute;left:32px;top:122.98px;font-family:'Liberation Mono',monospace;font-size:11.5px;line-height:16px;white-space:pre;color:#000;font-weight:400;-webkit-text-stroke:0.3px currentColor">}</span></div><div style="position:absolute;left:9.5px;top:644px;width:344.3px;height:90px;box-sizing:border-box;border:1px solid #e8e8ec;background:#f6f6f6;"><span id="il0" style="position:absolute;left:6.8px;top:8.003px;font-size:13px;line-height:18px;font-weight:700;color:#23233f;white-space:nowrap;transform:scaleX(0.9219);transform-origin:0 50%;">Start:</span><span id="iv0" style="position:absolute;right:7.2px;top:10.006px;font-size:11.6px;line-height:16px;font-weight:400;color:#3a3a58;white-space:nowrap;transform:scaleX(0.9822);transform-origin:100% 50%;">24/07/2020 10:09:21</span><span id="il1" style="position:absolute;left:6.8px;top:33.009px;font-size:13px;line-height:18px;font-weight:700;color:#23233f;white-space:nowrap;transform:scaleX(0.8519);transform-origin:0 50%;">Finish:</span><span id="iv1" style="position:absolute;right:7.2px;top:34.012px;font-size:11.6px;line-height:16px;font-weight:400;color:#3a3a58;white-space:nowrap;transform:scaleX(0.9822);transform-origin:100% 50%;">24/07/2020 10:09:22</span><span id="il2" style="position:absolute;left:6.8px;top:57px;font-size:13px;line-height:18px;font-weight:700;color:#23233f;white-space:nowrap;transform:scaleX(0.9002);transform-origin:0 50%;">Time:</span><span id="iv2" style="position:absolute;right:7.2px;top:59.003px;font-size:11.6px;line-height:16px;font-weight:400;color:#3a3a58;white-space:nowrap;transform:scaleX(1.0107);transform-origin:100% 50%;">911ms</span></div></div>
<div style="position:absolute;left:807px;top:0px;width:7px;height:739px;box-sizing:border-box;background:#e7e6ec;"></div>
<div style="position:absolute;left:814px;top:0px;width:312.2px;height:739px;box-sizing:border-box;background:#f5f5f5;overflow:hidden;"><svg style="position:absolute;left:0;top:0" width="312" height="739" viewBox="814 0 312 739"><path d="M880 85 V138 M880 190 V243" stroke="#e3e2ea" stroke-width="1.6" fill="none"/><path d="M880 295 V340.7 Q880 346.7 886 346.7 H1001.5 Q1007.5 346.7 1007.5 352.7 V424" stroke="#e3e2ea" stroke-width="1.6" fill="none"/><path d="M814 346.7 H864" stroke="#e6e5ed" stroke-width="1.6" fill="none"/><path d="M862.3 341.4 L868 346.7 L862.3 352 Z" fill="#e6e5ed"/><path d="M814 503.4 H872 Q878 503.4 879.4 508" stroke="#e6e5ed" stroke-width="1.6" fill="none"/><path d="M1007.5 476 V500 M1001 503.8 H886.4 Q880.4 503.8 880.4 509.8 V558" stroke="#ffa938" stroke-width="1.8" fill="none"/></svg><div style="position:absolute;left:40.2px;top:33px;width:53px;height:53px;box-sizing:border-box;background:#fff;border:1.2px solid #3f85f0;border-radius:4.5px;"><svg style="position:absolute;left:0px;top:0px;overflow:visible;margin:-1.2px" width="52" height="52" viewBox="0 0 52 52"><g transform="translate(-854,-33)" fill="none" stroke="#1a1a1a" stroke-width="1.25" stroke-linecap="round" stroke-linejoin="round"><path d="M889.7 58.3 A11.6 11.6 0 1 0 880.2 68.3"/><path d="M885.0 56.2 A6.9 6.9 0 1 0 878.2 63.8"/><path d="M878.2 56.8 L894.4 64.4 L887.7 66.7 L885.9 72.6 Z" fill="#fff"/></g></svg></div><span id="n1a" style="position:absolute;left:100.2px;top:40.012px;font-size:13px;line-height:18px;font-weight:700;color:#23233f;white-space:nowrap;transform:scaleX(0.9647);transform-origin:0 50%;">Manual Trigger</span><span id="n1b" style="position:absolute;left:100.2px;top:58.006px;font-size:12px;line-height:17px;font-weight:400;color:#9a9aab;white-space:nowrap;transform:scaleX(0.9466);transform-origin:0 50%;">trigger</span><div style="position:absolute;left:59.35px;top:105.55px;width:13.3px;height:13.3px;box-sizing:border-box;background:#b8b7c9;border-radius:2.2px;box-shadow:0 0 0 3.2px #f5f5f5;"><div style="position:absolute;left:1.3px;top:5.5px;width:10.7px;height:2.3px;background:#fff"></div><div style="position:absolute;left:5.55px;top:1.4px;width:2.2px;height:10.5px;background:#fff"></div></div><div style="position:absolute;left:40.2px;top:138px;width:53px;height:53px;box-sizing:border-box;background:#fff;border:1.2px solid #6dd4a9;border-radius:4.5px;"><svg style="position:absolute;left:10.9px;top:10.8px;overflow:visible;" width="28.3" height="28.3" viewBox="0 0 28 28"><defs><linearGradient id="cg80" x1="0" y1="0" x2="0" y2="1"><stop offset="0" stop-color="#f0761f"/><stop offset="0.45" stop-color="#f0641a"/><stop offset="1" stop-color="#ee5d18"/></linearGradient><clipPath id="cc80"><rect x="0" y="0" width="28" height="28" rx="2.6"/></clipPath></defs><rect x="0" y="0" width="28" height="28" rx="2.6" fill="url(#cg80)"/><g clip-path="url(#cc80)"><path d="M-1 21.5 C3 21 6.5 19.5 9 17.6 L12.8 19.6 C9 23 4 25.5 -1 26.6 Z" fill="#fbd9c4"/><path d="M3.6 16.4 L15.6 8.4 L25 10.2 L17.2 20 Z" fill="#ffffff"/><path d="M15.8 9 L16.6 13.2 L8 15.6" fill="none" stroke="#f6a57a" stroke-width="0.6"/></g></svg></div><span id="n2a" style="position:absolute;left:100.2px;top:145.012px;font-size:13px;line-height:18px;font-weight:700;color:#23233f;white-space:nowrap;transform:scaleX(0.9208);transform-origin:0 50%;">List receivers</span><span id="n2b" style="position:absolute;left:100.2px;top:163.009px;font-size:12px;line-height:17px;font-weight:400;color:#9a9aab;white-space:nowrap;transform:scaleX(0.9174);transform-origin:0 50%;">cleverreach-1</span><div style="position:absolute;left:59.35px;top:210.65px;width:13.3px;height:13.3px;box-sizing:border-box;background:#b8b7c9;border-radius:2.2px;box-shadow:0 0 0 3.2px #f5f5f5;"><div style="position:absolute;left:1.3px;top:5.5px;width:10.7px;height:2.3px;background:#fff"></div><div style="position:absolute;left:5.55px;top:1.4px;width:2.2px;height:10.5px;background:#fff"></div></div><div style="position:absolute;left:40.2px;top:243px;width:53px;height:53px;box-sizing:border-box;background:#fff;border:1.2px solid #ffd699;border-radius:4.5px;"><div style="position:absolute;left:27.6px;top:25.2px"><svg style="position:absolute;left:0;top:0;overflow:visible" width="1" height="1"><path d="M-9.76 5.19 A11.05 11.05 0 1 0 -10.91 1.73" fill="none" stroke="#1a1a1a" stroke-width="1.3" stroke-linecap="round"/><path d="M-14.69 -3.10 L-10.91 2.33 L-6.46 -2.32" fill="none" stroke="#1a1a1a" stroke-width="1.3" stroke-linecap="round" stroke-linejoin="round"/></svg></div></div><span id="n3a" style="position:absolute;left:100.2px;top:250.012px;font-size:13px;line-height:18px;font-weight:700;color:#23233f;white-space:nowrap;transform:scaleX(0.9316);transform-origin:0 50%;">Loop List</span><span id="n3b" style="position:absolute;left:100.2px;top:268.006px;font-size:12px;line-height:17px;font-weight:400;color:#9a9aab;white-space:nowrap;transform:scaleX(0.9503);transform-origin:0 50%;">loop-1</span><div style="position:absolute;left:187.05px;top:386.05px;width:13.3px;height:13.3px;box-sizing:border-box;background:#b8b7c9;border-radius:2.2px;box-shadow:0 0 0 3.2px #f5f5f5;"><div style="position:absolute;left:1.3px;top:5.5px;width:10.7px;height:2.3px;background:#fff"></div><div style="position:absolute;left:5.55px;top:1.4px;width:2.2px;height:10.5px;background:#fff"></div></div><div style="position:absolute;left:167.2px;top:423.5px;width:52.3px;height:52.3px;box-sizing:border-box;background:#fff;border:2px solid #3ecb8d;border-radius:4.5px;box-shadow:0 2px 10px rgba(40,40,80,0.13);"><svg style="position:absolute;left:11px;top:9.9px;overflow:visible;" width="28" height="28" viewBox="0 0 28 28"><defs><linearGradient id="cg85" x1="0" y1="0" x2="0" y2="1"><stop offset="0" stop-color="#f0761f"/><stop offset="0.45" stop-color="#f0641a"/><stop offset="1" stop-color="#ee5d18"/></linearGradient><clipPath id="cc85"><rect x="0" y="0" width="28" height="28" rx="2.6"/></clipPath></defs><rect x="0" y="0" width="28" height="28" rx="2.6" fill="url(#cg85)"/><g clip-path="url(#cc85)"><path d="M-1 21.5 C3 21 6.5 19.5 9 17.6 L12.8 19.6 C9 23 4 25.5 -1 26.6 Z" fill="#fbd9c4"/><path d="M3.6 16.4 L15.6 8.4 L25 10.2 L17.2 20 Z" fill="#ffffff"/><path d="M15.8 9 L16.6 13.2 L8 15.6" fill="none" stroke="#f6a57a" stroke-width="0.6"/></g></svg></div><div style="position:absolute;left:227.6px;top:425px;width:83.6px;height:30px;box-sizing:border-box;overflow:hidden;"><span id="n4a" style="position:absolute;left:0px;top:5.003px;font-size:13px;line-height:18px;font-weight:700;color:#23233f;white-space:nowrap;transform:scaleX(0.9470);transform-origin:0 50%;">Create group receiver tags</span></div><span id="n4b" style="position:absolute;left:227.6px;top:448.012px;font-size:12px;line-height:17px;font-weight:400;color:#9a9aab;white-space:nowrap;transform:scaleX(0.9243);transform-origin:0 50%;">cleverreach-2</span><div style="position:absolute;left:187.05px;top:500.75px;width:13.3px;height:13.3px;box-sizing:border-box;background:#b8b7c9;border-radius:2.2px;box-shadow:0 0 0 3.2px #f5f5f5;"><div style="position:absolute;left:1.3px;top:5.5px;width:10.7px;height:2.3px;background:#fff"></div><div style="position:absolute;left:5.55px;top:1.4px;width:2.2px;height:10.5px;background:#fff"></div></div><div style="position:absolute;left:59.45px;top:558.35px;width:13.3px;height:13.3px;box-sizing:border-box;background:#b8b7c9;border-radius:2.2px;box-shadow:0 0 0 3.2px #f5f5f5;"><div style="position:absolute;left:1.3px;top:5.5px;width:10.7px;height:2.3px;background:#fff"></div><div style="position:absolute;left:5.55px;top:1.4px;width:2.2px;height:10.5px;background:#fff"></div></div><div style="position:absolute;left:267.8px;top:14.5px;width:29px;height:29px;box-sizing:border-box;background:#fff;border:1px solid #e6e6ec;border-radius:4px;"><svg style="position:absolute;left:-1.3px;top:-1.7px;overflow:visible;" width="29" height="29" viewBox="0 0 29 29"><g fill="none" stroke="#55557a" stroke-width="1" stroke-linecap="round"><circle cx="13.6" cy="13.4" r="5.1"/><path d="M17.3 17.1 L21.1 20.9 M11.2 13.4 H16 M13.6 11 V15.8"/></g></svg></div><div style="position:absolute;left:267.8px;top:48.6px;width:29px;height:29px;box-sizing:border-box;background:#fff;border:1px solid #e6e6ec;border-radius:4px;"><svg style="position:absolute;left:-1.3px;top:-1.7px;overflow:visible;" width="29" height="29" viewBox="0 0 29 29"><g fill="none" stroke="#55557a" stroke-width="1" stroke-linecap="round" stroke-linejoin="round"><path d="M8.6 14 A6.1 6.1 0 0 1 19.6 10.6 M20.8 7.6 V11 H17.4"/><path d="M20.8 14.6 A6.1 6.1 0 0 1 9.8 18 M8.6 21 V17.6 H12"/></g></svg></div><div style="position:absolute;left:267.8px;top:82.4px;width:29px;height:29px;box-sizing:border-box;background:#fff;border:1px solid #e6e6ec;border-radius:4px;"><svg style="position:absolute;left:-1.3px;top:-1.7px;overflow:visible;" width="29" height="29" viewBox="0 0 29 29"><g fill="none" stroke="#55557a" stroke-width="1" stroke-linecap="round"><circle cx="13.6" cy="13.4" r="5.1"/><path d="M17.3 17.1 L21.1 20.9 M11.2 13.4 H16"/></g></svg></div></div>
<div style="position:absolute;left:1126px;top:0px;width:374px;height:739px;box-sizing:border-box;background:#fff;overflow:hidden;"><span id="op" style="position:absolute;left:15.7px;top:15.006px;font-size:13px;line-height:18px;font-weight:400;color:#34345a;white-space:nowrap;transform:scaleX(0.9931);transform-origin:0 50%;">Operation</span><div style="position:absolute;left:15.7px;top:42.4px;width:345.3px;height:37.4px;box-sizing:border-box;border:1px solid #e6e6eb;border-radius:4px;background:#fff;"></div><span id="opv" style="position:absolute;left:31.5px;top:52.012px;font-size:13px;line-height:18px;font-weight:400;color:#26262b;white-space:nowrap;transform:scaleX(0.9856);transform-origin:0 50%;">Create group receiver tags</span><svg style="position:absolute;left:336.2px;top:57.2px;overflow:visible;" width="12" height="8" viewBox="0 0 12 8"><path d="M0.6 1 L6 6.6 L11.4 1" fill="none" stroke="#45456a" stroke-width="1.5" stroke-linecap="round" stroke-linejoin="round"/></svg><div style="position:absolute;left:0px;top:126.7px;width:9.8px;height:1px;box-sizing:border-box;background:#eef1f5;"></div><span id="secINPUT" style="position:absolute;left:17.3px;top:119.009px;font-size:11.5px;line-height:16px;font-weight:400;color:#ccd5e1;white-space:nowrap;transform:scaleX(0.9652);transform-origin:0 50%;">INPUT</span><div style="position:absolute;left:58.7px;top:126.7px;width:302.3px;height:1px;box-sizing:border-box;background:#eef1f5;"></div><svg style="position:absolute;left:15.6px;top:155.9px;overflow:visible;" width="13" height="13" viewBox="0 0 13 13"><circle cx="6.5" cy="6.5" r="5.7" fill="none" stroke="#d0d0dc" stroke-width="1.4"/></svg><span id="gid" style="position:absolute;left:35.9px;top:153.003px;font-size:13px;line-height:18px;font-weight:700;color:#23233f;white-space:nowrap;transform:scaleX(0.9441);transform-origin:0 50%;">Group ID</span><span id="gids" style="position:absolute;left:89.4px;top:153.009px;font-size:11.5px;line-height:16px;font-weight:700;color:#e0384d;white-space:nowrap;">*</span><div style="position:absolute;left:301.1px;top:154.2px;width:13px;height:13px;box-sizing:border-box;background:#d0d0dc;border-radius:50%;"><span style="position:absolute;left:0;top:0;width:13px;text-align:center;font-size:10.5px;line-height:13.5px;font-weight:700;color:#fff;">?</span></div><div style="position:absolute;left:321.5px;top:150px;width:39.5px;height:24.6px;box-sizing:border-box;background:#f5f5f5;"><span id="A150" style="position:absolute;left:7.6px;top:4.006px;font-size:14.5px;line-height:20px;font-weight:400;color:#63637f;white-space:nowrap;font-family:'Liberation Serif',serif;">A</span><svg style="position:absolute;left:23.8px;top:9.8px;overflow:visible;" width="8" height="4.4" viewBox="0 0 8 4.4"><path d="M0 0 L8 0 L4 4.4 Z" fill="#45456a"/></svg></div><div style="position:absolute;left:15.7px;top:182.2px;width:345.3px;height:37.4px;box-sizing:border-box;border:1px solid #e6e6eb;border-radius:4px;background:#fff;"></div><span id="tg" style="position:absolute;left:31.5px;top:192.012px;font-size:13px;line-height:18px;font-weight:400;color:#26262b;white-space:nowrap;transform:scaleX(1.0151);transform-origin:0 50%;">test group</span><svg style="position:absolute;left:336.2px;top:197.2px;overflow:visible;" width="12" height="8" viewBox="0 0 12 8"><path d="M0.6 1 L6 6.6 L11.4 1" fill="none" stroke="#45456a" stroke-width="1.5" stroke-linecap="round" stroke-linejoin="round"/></svg><svg style="position:absolute;left:15.5px;top:247.7px;overflow:visible;" width="13" height="13" viewBox="0 0 13 13"><circle cx="6.5" cy="6.5" r="5.7" fill="#ffa938" stroke="#ffa938" stroke-width="1.4"/></svg><span id="rid" style="position:absolute;left:35.9px;top:245.003px;font-size:13px;line-height:18px;font-weight:700;color:#23233f;white-space:nowrap;transform:scaleX(0.9389);transform-origin:0 50%;">Receiver ID</span><span id="rids" style="position:absolute;left:103.3px;top:245.009px;font-size:11.5px;line-height:16px;font-weight:700;color:#e0384d;white-space:nowrap;">*</span><div style="position:absolute;left:301.9px;top:245.8px;width:13px;height:13px;box-sizing:border-box;background:#d0d0dc;border-radius:50%;"><span style="position:absolute;left:0;top:0;width:13px;text-align:center;font-size:10.5px;line-height:13.5px;font-weight:700;color:#fff;">?</span></div><div style="position:absolute;left:321.5px;top:242px;width:39.5px;height:24.6px;box-sizing:border-box;background:#f5f5f5;"><svg style="position:absolute;left:8px;top:5.6px;overflow:visible;" width="9.6" height="12" viewBox="0 0 9.6 12"><g fill="none" stroke="#50506e" stroke-width="0.9"><circle cx="2" cy="1.9" r="1.3"/><circle cx="2" cy="10.1" r="1.3"/><circle cx="7.6" cy="3.3" r="1.3"/><path d="M2 3.2 V8.8 M7.6 4.6 C7.6 7 2.4 6.4 2 8.8"/></g></svg><svg style="position:absolute;left:23.8px;top:9.8px;overflow:visible;" width="8" height="4.4" viewBox="0 0 8 4.4"><path d="M0 0 L8 0 L4 4.4 Z" fill="#45456a"/></svg></div><div style="position:absolute;left:15.7px;top:274.2px;width:345.3px;height:37.2px;box-sizing:border-box;border:1px solid #e6e6eb;border-radius:4px;background:#fff;"></div><span id="rv" style="position:absolute;left:31.5px;top:284.006px;font-size:13px;line-height:18px;font-weight:400;color:#26262b;white-space:nowrap;transform:scaleX(0.9916);transform-origin:0 50%;">$.steps.loop-1.value.id</span><svg style="position:absolute;left:15.6px;top:339.7px;overflow:visible;" width="13" height="13" viewBox="0 0 13 13"><circle cx="6.5" cy="6.5" r="5.7" fill="none" stroke="#d0d0dc" stroke-width="1.4"/></svg><span id="tags" style="position:absolute;left:35.9px;top:337.003px;font-size:13px;line-height:18px;font-weight:700;color:#23233f;white-space:nowrap;transform:scaleX(0.9357);transform-origin:0 50%;">Tags</span><span id="tagss" style="position:absolute;left:64px;top:337.009px;font-size:11.5px;line-height:16px;font-weight:700;color:#e0384d;white-space:nowrap;">*</span><div style="position:absolute;left:301.1px;top:337.8px;width:13px;height:13px;box-sizing:border-box;background:#d0d0dc;border-radius:50%;"><span style="position:absolute;left:0;top:0;width:13px;text-align:center;font-size:10.5px;line-height:13.5px;font-weight:700;color:#fff;">?</span></div><div style="position:absolute;left:321.5px;top:334.2px;width:39.5px;height:24.6px;box-sizing:border-box;background:#f5f5f5;"><svg style="position:absolute;left:7.8px;top:6.2px;overflow:visible;" width="9.4" height="10.4" viewBox="0 0 9.4 10.4"><path d="M2.6 0.5 H0.6 V9.9 H2.6 M6.8 0.5 H8.8 V9.9 H6.8" fill="none" stroke="#50506e" stroke-width="1"/></svg><svg style="position:absolute;left:23.8px;top:9.8px;overflow:visible;" width="8" height="4.4" viewBox="0 0 8 4.4"><path d="M0 0 L8 0 L4 4.4 Z" fill="#45456a"/></svg></div><div style="position:absolute;left:21px;top:365.8px;width:1px;height:69.6px;box-sizing:border-box;background:#d4d4de;"></div><div style="position:absolute;left:21px;top:377.3px;width:10px;height:1px;box-sizing:border-box;background:#d4d4de;"></div><svg style="position:absolute;left:40.9px;top:371.8px;overflow:visible;" width="13" height="13" viewBox="0 0 13 13"><circle cx="6.5" cy="6.5" r="5.7" fill="none" stroke="#d0d0dc" stroke-width="1.4"/></svg><span id="tag" style="position:absolute;left:61.5px;top:369.003px;font-size:13px;line-height:18px;font-weight:700;color:#23233f;white-space:nowrap;transform:scaleX(0.9568);transform-origin:0 50%;">Tag</span><div style="position:absolute;left:301.1px;top:369.8px;width:13px;height:13px;box-sizing:border-box;background:#d0d0dc;border-radius:50%;"><span style="position:absolute;left:0;top:0;width:13px;text-align:center;font-size:10.5px;line-height:13.5px;font-weight:700;color:#fff;">?</span></div><div style="position:absolute;left:321.5px;top:366.2px;width:39.5px;height:24.6px;box-sizing:border-box;background:#f5f5f5;"><span id="A366" style="position:absolute;left:7.6px;top:3.819px;font-size:14.5px;line-height:20px;font-weight:400;color:#63637f;white-space:nowrap;font-family:'Liberation Serif',serif;">A</span><svg style="position:absolute;left:23.8px;top:9.8px;overflow:visible;" width="8" height="4.4" viewBox="0 0 8 4.4"><path d="M0 0 L8 0 L4 4.4 Z" fill="#45456a"/></svg></div><div style="position:absolute;left:41.4px;top:398px;width:319.6px;height:37.8px;box-sizing:border-box;border:1px solid #e6e6eb;border-radius:4px;background:#fff;"><svg style="position:absolute;left:308.4px;top:27.2px;overflow:visible;" width="8" height="8" viewBox="0 0 8 8"><path d="M0.6 7.8 L7.8 0.6 M4.4 7.8 L7.8 4.4" stroke="#55555f" stroke-width="0.9" fill="none"/></svg></div><span id="tv" style="position:absolute;left:57px;top:408px;font-size:13px;line-height:18px;font-weight:400;color:#26262b;white-space:nowrap;transform:scaleX(1.0035);transform-origin:0 50%;">Active July 2020</span><span id="addm" style="position:absolute;left:31px;top:467.003px;font-size:13.5px;line-height:19px;font-weight:400;color:#50506c;white-space:nowrap;transform:scaleX(0.9967);transform-origin:0 50%;-webkit-text-stroke:0.25px #50506c;">Add more than one item to Tags</span><div style="position:absolute;left:15.7px;top:510.8px;width:345.3px;height:37.2px;box-sizing:border-box;background:#f5f5f5;border-radius:4px;"></div><span id="addt" style="position:absolute;left:188.3px;top:519px;font-size:13.5px;line-height:19px;font-weight:400;color:#50506c;white-space:nowrap;transform:translateX(-50%) scaleX(1.0090);-webkit-text-stroke:0.25px #50506c;">Add to Tags</span><div style="position:absolute;left:15.7px;top:594.2px;width:345.3px;height:37.4px;box-sizing:border-box;background:#f5f5f5;border-radius:4px;"></div><span id="showa" style="position:absolute;left:188.3px;top:604.003px;font-size:13.5px;line-height:19px;font-weight:400;color:#50506c;white-space:nowrap;transform:translateX(-50%) scaleX(0.9921);-webkit-text-stroke:0.25px #50506c;">Show advanced properties</span><div style="position:absolute;left:0px;top:654px;width:9.8px;height:1px;box-sizing:border-box;background:#eef1f5;"></div><span id="secOUTPUT" style="position:absolute;left:17.3px;top:646.012px;font-size:11.5px;line-height:16px;font-weight:400;color:#ccd5e1;white-space:nowrap;transform:scaleX(0.9602);transform-origin:0 50%;">OUTPUT</span><div style="position:absolute;left:71px;top:654px;width:290px;height:1px;box-sizing:border-box;background:#eef1f5;"></div><div style="position:absolute;left:28.6px;top:703px;width:1.2px;height:40px;box-sizing:border-box;background:#e6eaf1;"></div><div style="position:absolute;left:28.6px;top:729.8px;width:8px;height:1.2px;box-sizing:border-box;background:#e6eaf1;"></div><div style="position:absolute;left:55.2px;top:729.5px;width:1.2px;height:12px;box-sizing:border-box;background:#e6eaf1;"></div><svg style="position:absolute;left:23px;top:689px;overflow:visible;" width="13" height="13" viewBox="0 0 13 13"><circle cx="6.5" cy="6.5" r="5.7" fill="none" stroke="#cdd6e1" stroke-width="1.4"/></svg><svg style="position:absolute;left:47px;top:686.6px;overflow:visible;" width="12" height="10.4" viewBox="0 0 12 10.4"><g fill="none" stroke="#34345a" stroke-width="1"><rect x="0.5" y="0.5" width="11" height="9.4" rx="1"/><path d="M0.5 3.6 H11.5 M0.5 6.7 H11.5 M4.2 0.5 V9.9"/></g></svg><span id="outt" style="position:absolute;left:71px;top:681.009px;font-size:13px;line-height:18px;font-weight:400;color:#2b2b4d;white-space:nowrap;transform:scaleX(0.9971);transform-origin:0 50%;">Create group receiver tags Output</span><svg style="position:absolute;left:48.9px;top:715.3px;overflow:visible;" width="13" height="13" viewBox="0 0 13 13"><circle cx="6.5" cy="6.5" r="5.7" fill="none" stroke="#cdd6e1" stroke-width="1.4"/></svg><svg style="position:absolute;left:73.6px;top:713.2px;overflow:visible;" width="10.4" height="9.6" viewBox="0 0 10.4 9.6"><path d="M2.4 0.5 H0.6 V9.1 H2.4 M8 0.5 H9.8 V9.1 H8" fill="none" stroke="#34345a" stroke-width="1"/></svg><span id="res" style="position:absolute;left:97.4px;top:708px;font-size:13px;line-height:18px;font-weight:400;color:#2b2b4d;white-space:nowrap;transform:scaleX(0.9818);transform-origin:0 50%;">results</span><div style="position:absolute;left:126.6px;top:737.4px;width:2px;height:2px;box-sizing:border-box;background:#34345a;border-radius:50%;"></div></div>
</body></html>
